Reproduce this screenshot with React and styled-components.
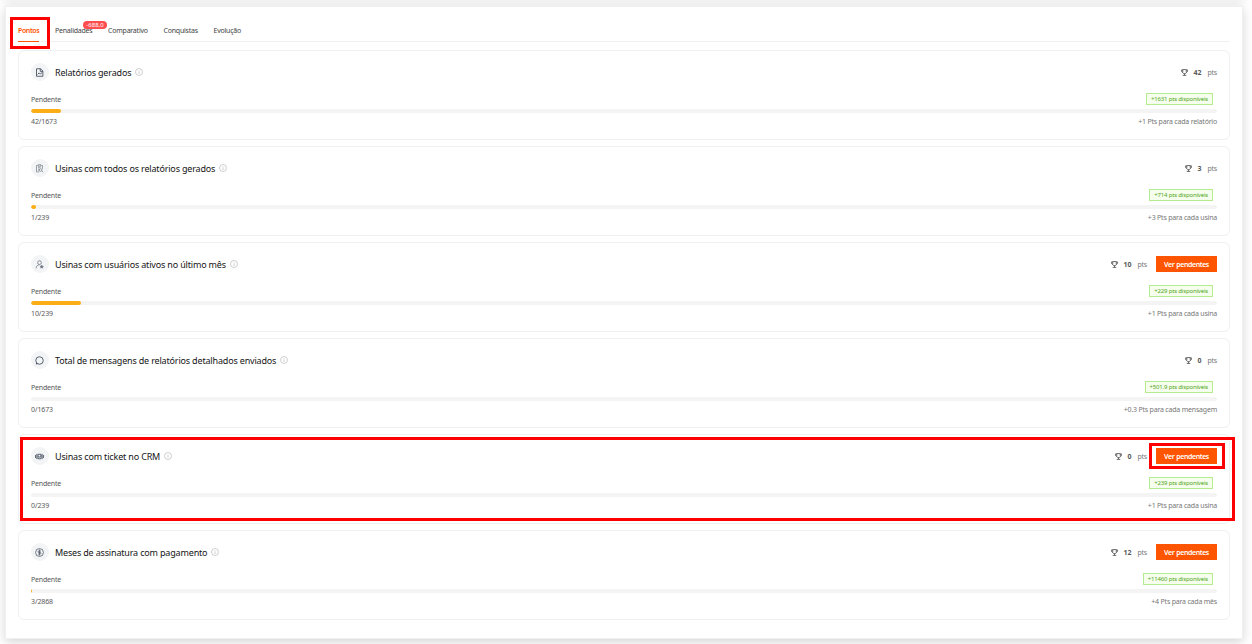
import styled, { createGlobalStyle } from 'styled-components';

const GlobalStyle = createGlobalStyle`
  * {
    box-sizing: border-box;
  }

  body {
    margin: 0;
    overflow: hidden;
    background: #fff;
    color: #595959;
    font-family: 'Noto Sans', 'Open Sans', sans-serif;
    font-size: 7px;
    letter-spacing: -0.2px;
  }
`;

const Page = styled.div`
  height: 644px;
  padding: 0 9px 0 5px;
  display: flex;
  flex-direction: column;
  gap: 6px;
  overflow: hidden;
`;

const PreviousPanel = styled.div`
  flex: none;
  height: 0;
  box-shadow: 0 0 8px 2px rgba(0, 0, 0, 0.13);
`;

const Panel = styled.main`
  position: relative;
  height: 633px;
  padding: 13px 12px 0;
  background: #fff;
  border: 1px solid #f0f0f0;
  box-shadow: 0 3px 10px rgba(0, 0, 0, 0.17);
`;

const Tabs = styled.nav`
  display: flex;
  align-items: stretch;
  gap: 16px;
  height: 22px;
  border-bottom: 1px solid #f0f0f0;
`;

const Tab = styled.div`
  position: relative;
  height: 22px;
  width: ${({ $width }) => $width}px;
  line-height: 22px;
  letter-spacing: ${({ $active }) => ($active ? '-0.4px' : '-0.22px')};
  white-space: nowrap;
  color: ${({ $active }) => ($active ? '#ff5500' : '#434343')};
  font-weight: ${({ $active }) => ($active ? 600 : 400)};
  border-bottom: 1px solid ${({ $active }) => ($active ? '#ff5500' : 'transparent')};
`;

const Badge = styled.span`
  position: absolute;
  top: 1px;
  right: -15px;
  width: 24px;
  height: 8px;
  border-radius: 4px;
  background: #ff4d4f;
  color: #fff;
  font-size: 6px;
  line-height: 8px;
  letter-spacing: 0;
  text-align: center;
`;

const List = styled.div`
  display: flex;
  flex-direction: column;
  gap: 6px;
  margin-top: 8px;
`;

const Card = styled.section`
  position: relative;
  height: 90px;
  padding: 12px 12px 0;
  border: 1px solid #f0f0f0;
  border-radius: 6px;
`;

const Row = styled.div`
  display: flex;
  align-items: center;
  justify-content: space-between;
`;

const Header = styled(Row)`
  height: 18px;
`;

const Heading = styled.div`
  display: flex;
  align-items: center;
`;

const IconCircle = styled.span`
  display: flex;
  align-items: center;
  justify-content: center;
  width: 18px;
  height: 18px;
  padding-right: 1px;
  margin-right: 6px;
  border-radius: 50%;
  background: #f3f4f6;
  color: #6b7280;
`;

const Title = styled.h2`
  margin: 0 4px 0 0;
  padding-top: 2px;
  color: #141414;
  font-size: 9px;
  font-weight: 400;
  line-height: 16px;
  letter-spacing: -0.17px;
  white-space: nowrap;
`;

const Score = styled.div`
  display: flex;
  align-items: center;
  color: #777;
`;

const Points = styled.strong`
  margin: 0 6px 0 5px;
  color: #595959;
  font-weight: 700;
  letter-spacing: 0;
`;

const PendingButton = styled.button`
  position: relative;
  width: 61px;
  height: 16px;
  margin-left: 9px;
  padding: 1px 0 0;
  border: 0;
  background: #ff5500;
  color: #fff;
  font-family: inherit;
  font-size: 7px;
  font-weight: 600;
  line-height: 15px;
  letter-spacing: -0.4px;
  word-spacing: 0.5px;
`;

const Status = styled(Row)`
  height: 12px;
  margin-top: 12px;
  padding-right: 4px;
`;

const Tag = styled.span`
  height: 12px;
  padding: 0 4px;
  border: 1px solid #b7eb8f;
  background: #f6ffed;
  color: #52a51a;
  font-size: 6px;
  line-height: 10px;
  letter-spacing: -0.17px;
  white-space: nowrap;
`;

const Track = styled.div`
  height: 4px;
  margin-top: 4px;
  overflow: hidden;
  border-radius: 2px;
  background: #f4f4f4;
`;

const Fill = styled.div`
  height: 4px;
  border-radius: 2px;
  background: #faad14;
`;

const Footer = styled(Row)`
  height: 12px;
  margin-top: 2px;
`;

const Count = styled.span`
  letter-spacing: -0.1px;
`;

const Muted = styled.span`
  color: #777;
`;

// Red annotation frame laid over the interface
const Marker = styled.span`
  position: absolute;
  z-index: 2;
  inset: ${({ $inset }) => $inset};
  border: 3px solid #ff0000;
  pointer-events: none;
`;

const Svg = ({ size = 9, children, ...rest }) => (
  <svg
    width={size}
    height={size}
    viewBox="0 0 24 24"
    fill="none"
    stroke="currentColor"
    strokeWidth="2"
    {...rest}
  >
    {children}
  </svg>
);

const icons = {
  report: (
    <Svg color="#4b5563" strokeWidth="2.4">
      <path d="M4 2h11l6 6v14H4z M14 2v7h7 M7 17l4-4 3 3 5-4" />
    </Svg>
  ),
  search: (
    <Svg color="#7b818c">
      <path d="M7 4H4v17h7 M17 4h3v9 M8 2h8v4H8z M8 10h7 M8 14h3 M8 18h2" />
      <circle cx="15" cy="16" r="3.5" />
      <path d="M18 18l4 4" />
    </Svg>
  ),
  user: (
    <Svg color="#6b7280">
      <circle cx="12" cy="7" r="5" />
      <path d="M3 22c0-6 4-9 9-9" />
      <path d="M18 14l1.2 2.5 2.8.3-2 2 .6 2.7-2.6-1.4-2.6 1.4.6-2.7-2-2 2.8-.3z" fill="currentColor" />
    </Svg>
  ),
  message: (
    <Svg color="#4b5563" strokeWidth="2.4">
      <circle cx="12" cy="12" r="10" />
      <path d="M4.500 18.500L3.500 21.500L7 20.500" />
    </Svg>
  ),
  ticket: (
    <Svg color="#4b5563" strokeWidth="2.4">
      <path d="M1.500 8v8 M5 5v14 M22.500 8v8 M19 5v14 M8 6h8v12H8z M9 12l3 2 4-5" />
    </Svg>
  ),
  money: (
    <Svg color="#4b5563">
      <circle cx="12" cy="12" r="10.5" />
      <path d="M16 8h-6a2 2 0 0 0 0 4h4a2 2 0 0 1 0 4H8 M12 4v16" />
    </Svg>
  ),
};

const InfoIcon = () => (
  <Svg size={8} color="#b0b0b0" strokeWidth="1.8">
    <circle cx="12" cy="12" r="10.5" />
    <path d="M12 10v8 M12 6v2" />
  </Svg>
);

const TrophyIcon = () => (
  <Svg size={7} color="#595959" strokeWidth="3">
    <path d="M6 2h12v11l-3 3H9l-3-3z M6 3H2v6l4 3 M18 3h4v6l-4 3 M12 16v6 M6 22h12" />
  </Svg>
);

const goals = [
  { icon: 'report', title: 'Relatórios gerados', points: 42, available: '+1631', count: '42/1673', percent: 2.51, rule: '+1 Pts para cada relatório' },
  { icon: 'search', title: 'Usinas com todos os relatórios gerados', points: 3, available: '+714', count: '1/239', percent: 0.42, rule: '+3 Pts para cada usina' },
  { icon: 'user', title: 'Usinas com usuários ativos no último mês', points: 10, available: '+229', count: '10/239', percent: 4.18, rule: '+1 Pts para cada usina', pending: true },
  { icon: 'message', title: 'Total de mensagens de relatórios detalhados enviados', points: 0, available: '+501.9', count: '0/1673', percent: 0, rule: '+0.3 Pts para cada mensagem' },
  { icon: 'ticket', title: 'Usinas com ticket no CRM', points: 0, available: '+239', count: '0/239', percent: 0, rule: '+1 Pts para cada usina', pending: true, marked: true },
  { icon: 'money', title: 'Meses de assinatura com pagamento', points: 12, available: '+11460', count: '3/2868', percent: 0.1, rule: '+4 Pts para cada mês', pending: true },
];

const GoalCard = ({ goal }) => (
  <Card>
    {goal.marked && <Marker $inset="2px -6px 2px 1px" />}
    <Header>
      <Heading>
        <IconCircle>{icons[goal.icon]}</IconCircle>
        <Title>{goal.title}</Title>
        <InfoIcon />
      </Heading>
      <Score>
        <TrophyIcon />
        <Points>{goal.points}</Points>
        <span>pts</span>
        {goal.pending && (
          <PendingButton>
            Ver pendentes
            {goal.marked && <Marker $inset="-5px -8px -5px -7px" />}
          </PendingButton>
        )}
      </Score>
    </Header>
    <Status>
      <span>Pendente</span>
      <Tag>{goal.available} pts disponíveis</Tag>
    </Status>
    <Track>
      <Fill style={{ width: `${goal.percent}%` }} />
    </Track>
    <Footer>
      <Count>{goal.count}</Count>
      <Muted>{goal.rule}</Muted>
    </Footer>
  </Card>
);

const App = () => (
  <>
    <GlobalStyle />
    <Page>
      <PreviousPanel />
      <Panel>
        <Tabs>
          <Tab $active $width={21}>
            Pontos
            <Marker $inset="-3px -11px -8px -8px" />
          </Tab>
          <Tab $width={37}>
            Penalidades
            <Badge>-688,0</Badge>
          </Tab>
          <Tab $width={39.5}>Comparativo</Tab>
          <Tab $width={34}>Conquistas</Tab>
          <Tab $width={28}>Evolução</Tab>
        </Tabs>
        <List>
          {goals.map((goal) => (
            <GoalCard goal={goal} key={goal.title} />
          ))}
        </List>
      </Panel>
    </Page>
  </>
);

export default App;
